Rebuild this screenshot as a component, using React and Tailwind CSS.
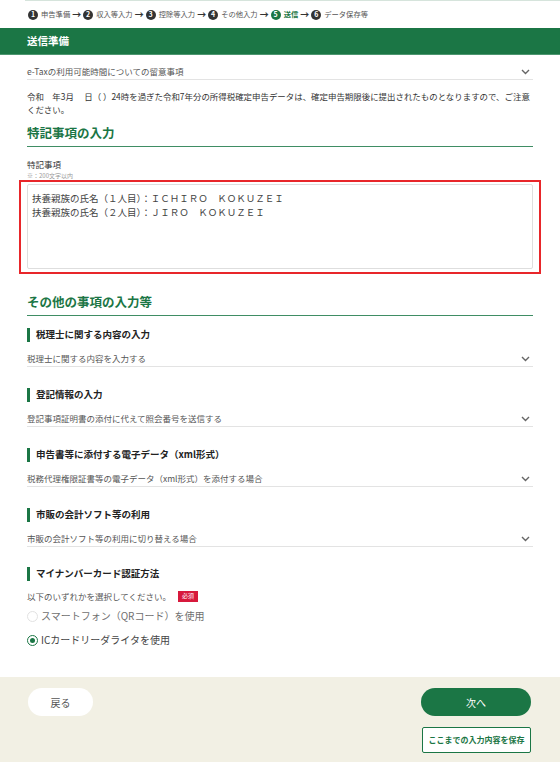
import React from 'react'

const font = { fontFamily: '"Noto Sans CJK JP", "Noto Sans", sans-serif' }

const steps = [
  { n: '1', label: '申告準備' },
  { n: '2', label: '収入等入力' },
  { n: '3', label: '控除等入力' },
  { n: '4', label: 'その他入力' },
  { n: '5', label: '送信', active: true },
  { n: '6', label: 'データ保存等' },
]

function Chevron() {
  return (
    <svg width="9" height="6" viewBox="0 0 9 6" className="text-[#666]">
      <polyline points="1,1 4.5,4.5 8,1" fill="none" stroke="currentColor" strokeWidth="1.4" />
    </svg>
  )
}

function AccordionRow({ text }) {
  return (
    <div className="h-[16px] flex items-center justify-between border-b border-[#e3e3e3] pr-[3px]">
      <span className="text-[8.5px] text-[#555] leading-none">{text}</span>
      <Chevron />
    </div>
  )
}

function SubHeading({ children }) {
  return (
    <div className="flex items-center gap-[6px] h-[14px]">
      <div className="w-[3px] h-[14px] bg-[#1b7645]" />
      <span className="text-[9.5px] font-bold text-[#222] leading-none">{children}</span>
    </div>
  )
}

function Section({ title, row }) {
  return (
    <div className="mt-[21px]">
      <SubHeading>{title}</SubHeading>
      <div className="mt-[9px]">
        <AccordionRow text={row} />
      </div>
    </div>
  )
}

export default function App() {
  return (
    <div className="w-[560px] h-[762px] bg-white flex flex-col overflow-hidden" style={font}>
      {/* Steps */}
      <div className="h-[28px] ml-[25px] border-t border-[#d6e4dc] flex items-center pl-[3px] gap-[2px]">
        {steps.map((s, i) => (
          <React.Fragment key={s.n}>
            <span className="flex items-center gap-[3px]">
              <span className={`w-[10px] h-[10px] rounded-full flex items-center justify-center text-white text-[7px] font-bold leading-none ${s.active ? 'bg-[#1b7645]' : 'bg-[#333]'}`}>{s.n}</span>
              <span className={`text-[7.3px] leading-none ${s.active ? 'text-[#1b7645] font-bold' : 'text-[#555]'}`}>{s.label}</span>
            </span>
            {i < steps.length - 1 && <span className="w-[9px] text-[9px] font-bold text-[#333] leading-none flex justify-center">→</span>}
          </React.Fragment>
        ))}
      </div>

      {/* Header bar */}
      <div className="h-[27px] bg-[#1b7645] border-b border-[#4d9670] flex items-center px-[27px]">
        <span className="text-white text-[10.5px] font-bold leading-none">送信準備</span>
      </div>

      <div className="px-[27px] flex-1">
        <div className="pt-[9px]">
          <AccordionRow text="e-Taxの利用可能時間についての留意事項" />
        </div>
        <p className="mt-[10px] text-[8.45px] leading-[13px] text-[#333]">
          令和　年3月　 日（ ）24時を過ぎた令和7年分の所得税確定申告データは、確定申告期限後に提出されたものとなりますので、ご注意ください。
        </p>

        <h2 className="mt-[8px] text-[12.5px] leading-[18px] font-bold text-[#1b7645] pb-[4px] border-b-[1.5px] border-[#3f8d64]">特記事項の入力</h2>

        <div className="mt-[11px] text-[8.5px] leading-[12px] text-[#333]">特記事項</div>
        <div className="mt-[2px] text-[6px] leading-[8px] text-[#999]">※：200文字以内</div>

        {/* highlighted textarea */}
        <div className="-mx-[8px] border-2 border-[#e8262a] pt-[2px] pb-[3px] px-[6px]">
          <div className="h-[85px] border border-[#dedede] rounded-[2px] pl-[4px] pt-[6px] text-[9.5px] leading-[14px] text-[#444] whitespace-pre">
            {'扶養親族の氏名（１人目）：ＩＣＨＩＲＯ　ＫＯＫＵＺＥＩ\n扶養親族の氏名（２人目）：ＪＩＲＯ　ＫＯＫＵＺＥＩ'}
          </div>
        </div>

        <h2 className="mt-[19px] text-[12.5px] leading-[18px] font-bold text-[#1b7645] pb-[4px] border-b-[1.5px] border-[#3f8d64]">その他の事項の入力等</h2>

        <div className="-mt-[9px]">
          <Section title="税理士に関する内容の入力" row="税理士に関する内容を入力する" />
          <Section title="登記情報の入力" row="登記事項証明書の添付に代えて照会番号を送信する" />
          <Section title="申告書等に添付する電子データ（xml形式）" row="税務代理権限証書等の電子データ（xml形式）を添付する場合" />
          <Section title="市販の会計ソフト等の利用" row="市販の会計ソフト等の利用に切り替える場合" />
        </div>

        <div className="mt-[20px]">
          <SubHeading>マイナンバーカード認証方法</SubHeading>
          <div className="mt-[9px] h-[12px] flex items-center gap-[7px]">
            <span className="text-[8.5px] text-[#555] leading-none">以下のいずれかを選択してください。</span>
            <span className="bg-[#d7193c] text-white text-[6px] leading-none px-[4px] h-[11px] flex items-center">必須</span>
          </div>
          <div className="mt-[7px] h-[14px] flex items-center gap-[3px]">
            <span className="w-[11px] h-[11px] rounded-full border border-[#e2e2e2] bg-white" />
            <span className="text-[10px] text-[#6f6f6f] leading-none">スマートフォン（QRコード）を使用</span>
          </div>
          <div className="mt-[10px] h-[14px] flex items-center gap-[3px]">
            <span className="w-[11px] h-[11px] rounded-full border-[1.5px] border-[#1b7645] bg-white flex items-center justify-center">
              <span className="w-[5px] h-[5px] rounded-full bg-[#1b7645]" />
            </span>
            <span className="text-[10px] text-[#444] leading-none">ICカードリーダライタを使用</span>
          </div>
        </div>
      </div>

      {/* Footer */}
      <div className="h-[85px] bg-[#f2f0e4] px-[28px] pt-[11px] flex justify-between shrink-0">
        <button className="w-[65px] h-[28px] rounded-full bg-white text-[10px] text-[#555]">戻る</button>
        <div className="flex flex-col items-end gap-[11px] pr-[1px]">
          <button className="w-[110px] h-[28px] rounded-full bg-[#1b7645] text-white text-[10px]">次へ</button>
          <button className="w-[109px] h-[26px] rounded-[2px] bg-white border border-[#1b7645] text-[#1b7645] text-[8px] font-bold">ここまでの入力内容を保存</button>
        </div>
      </div>
    </div>
  )
}
